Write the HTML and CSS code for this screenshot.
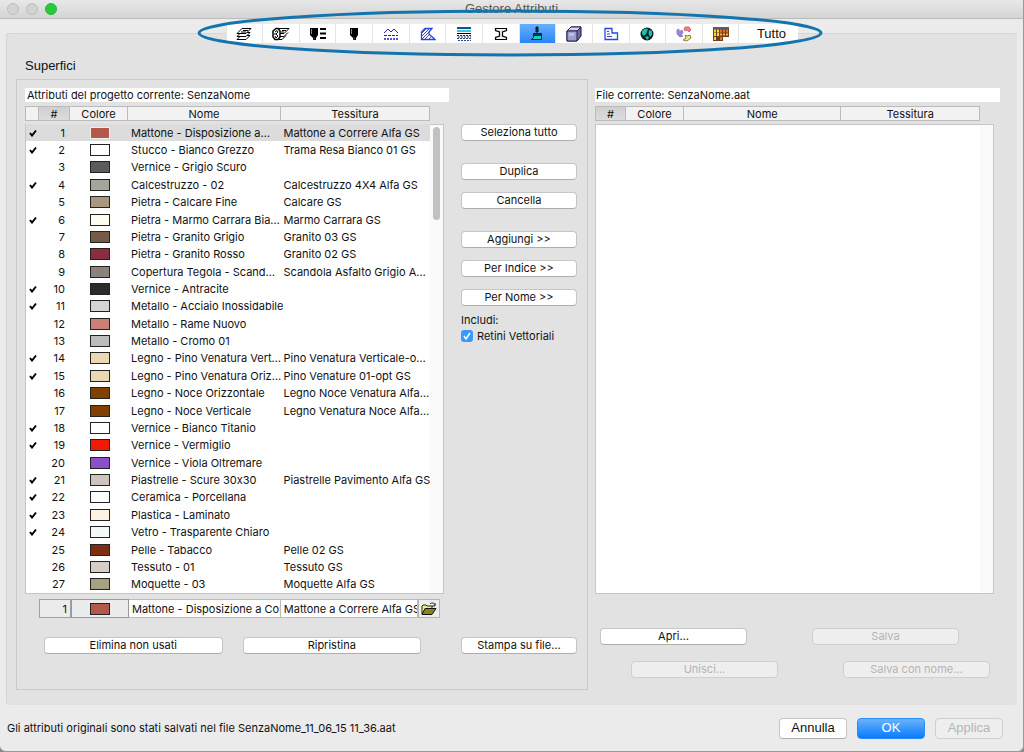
FILE: index.html
```html
<!DOCTYPE html>
<html lang="it">
<head>
<meta charset="utf-8">
<title>Gestore Attributi</title>
<link rel="stylesheet" href="styles.css">
</head>
<body>
<div class="window">
  <header class="titlebar">
    <div class="lights"><span class="light"></span><span class="light"></span><span class="light zoom"></span></div>
    <h1>Gestore Attributi</h1>
  </header>

  <div class="tabs-wrap">
    <nav class="tabs" aria-label="Attributi">
      <button type="button" aria-label="Lucidi"><svg viewBox="0 0 16 16"><g fill="#fff" stroke="#000"><path d="M1 13.500L5 9.500H14L10 13.500Z"/><path d="M1 10.500L5 6.500H14L10 10.500Z"/><path d="M1 7.500L6 2.500H15L10 7.500Z"/><path d="M7 4.500H12M5 6H10"/></g></svg></button>
      <button type="button" aria-label="Combinazioni lucidi"><svg class="wide" viewBox="0 0 18 16"><g fill="#fff" stroke="#000"><path d="M7 13.500H10L14 9.500M7 10.500H12L16 6.500M8 7.500H12L17 2.500H7L5 5M10 4.500H14M9 6H12"/><path d="M4 2.500H6L8 5V11L6 13.500H3L1 11V5Z" stroke-width="1.500"/><path d="M3 6L5 4.500L6 6L4 8L6 10L4 12L3 10M3 7V9"/></g></svg></button>
      <button type="button" aria-label="Penne e colori"><svg class="wide" viewBox="0 0 18 16"><path d="M1 2H9V9L7 12V14H4V12L1 9Z"/><path d="M4 11H6V14H4Z" fill="#11117a"/><path d="M2.500 3V8" stroke="#888"/><path d="M11 3H17M11 7.500H17M11 12H17" stroke="#000" stroke-width="2"/></svg></button>
      <button type="button" aria-label="Penne"><svg viewBox="0 0 16 16"><path d="M4 2H12V9L10 12V14H7V12L4 9Z"/><path d="M7 11H9V14H7Z" fill="#222266"/><path d="M5.500 3V8" stroke="#888"/></svg></button>
      <button type="button" aria-label="Tipi di linea"><svg viewBox="0 0 16 16"><g fill="none" stroke="#2222bb"><path d="M1 7L5 3L8 6L11 3L15 7"/><path d="M1 9.500H15" stroke-dasharray="3 1"/><path d="M1 13H15" stroke-width="1.500" stroke-dasharray="2 1"/></g></svg></button>
      <button type="button" aria-label="Retini"><svg viewBox="0 0 16 16"><path d="M1.500 6L5 2.500H12L9 6V8L15 13.500H1.500Z" fill="#fff" stroke="#2446e8" stroke-width="1.300"/><path d="M2 10L9 3M2 13L9 6M5 13L9 9M9 13L11 11M2 7L6 3" stroke="#444c98"/></svg></button>
      <button type="button" aria-label="Strutture composte"><svg viewBox="0 0 16 16"><path d="M1 1H15V3H1Z" fill="#14508c"/><path d="M1 4H15V6H1Z" fill="#39c8d8"/><path d="M1 7.500H15" stroke="#000"/><path d="M1 9.500H15M2 11H15" stroke="#222" stroke-dasharray="2 1"/><path d="M1 12.500H15M2 14.500H15" stroke="#334488" stroke-dasharray="2 1"/></svg></button>
      <button type="button" aria-label="Profili"><svg viewBox="0 0 16 16"><path d="M2.500 2.500H13.500V4.500L9.500 6V10L13.500 11.500V13.500H2.500V11.500L6.500 10V6L2.500 4.500Z" fill="#eee" stroke="#000" stroke-width="1.200"/></svg></button>
      <button type="button" class="active" aria-label="Superfici" aria-current="page"><svg viewBox="0 0 16 16"><path d="M7 1H9V6H7Z" fill="#062033" stroke="#062033"/><path d="M4.500 7.500H12.500V9H4.500Z" fill="#0c6a70" stroke="#062033"/><path d="M4.500 9.500H12.500V13.500H2.500L4.500 11.500Z" fill="#13d7c2" stroke="#06243c"/></svg></button>
      <button type="button" aria-label="Materiali da costruzione"><svg viewBox="0 0 16 16"><path d="M1 5L5 1H15V10L11 15H1Z" fill="#6a6aa8" stroke="#111133"/><path d="M1 5L5 1H15L11 5Z" fill="#d5d5f4" stroke="#222244"/><path d="M1 5H11V15H1Z" fill="#9d9dd0" stroke="#222244"/><path d="M3 7H8V10H3Z" fill="#bebee8"/></svg></button>
      <button type="button" aria-label="Zone"><svg viewBox="0 0 16 16"><path d="M2 2.500H9V7H14.500V13.500H2Z" fill="#fff" stroke="#2446f0" stroke-width="1.300"/><path d="M4 5.500H6M4 8H7M4 10.500H9" stroke="#3547a5"/></svg></button>
      <button type="button" aria-label="Città"><svg viewBox="0 0 16 16"><circle cx="8" cy="8" r="6.500" fill="#101b1b"/><path d="M3 5L6 2.500L9 3L8 6L7 8L5 10L3 8ZM10 4L13 5V9L11 11L9.500 8ZM6 11L9 10L10 12L8 14Z" fill="#0cc4b8"/></svg></button>
      <button type="button" aria-label="Marche"><svg viewBox="0 0 16 16"><path d="M9 1H13L15 4L13 6L11 4L9 5L8 3Z" fill="#ef7c83" stroke="#c6717a"/><path d="M1 4L3 3V6L6 4L7 7L5 8L7 10L4 11L1 8Z" fill="#9786d8" stroke="#9182d0"/><path d="M9 9L11 10L14 9L15 12L11 15L7 14L10 12Z" fill="#f2e47c" stroke="#8b8048"/></svg></button>
      <button type="button" aria-label="Profili operativi"><svg viewBox="0 0 16 16"><path d="M0 1H16V11H10V15H0Z" fill="#743c22"/><path d="M0 1H16V3H0Z" fill="#5f5a70"/><path d="M1 5H7M1 8.500H7M1 12.500H4" stroke="#f5dd24" stroke-width="3" stroke-dasharray="2 1"/><path d="M7 5H15M7 12.500H9" stroke="#d97525" stroke-width="3" stroke-dasharray="2 1"/><path d="M7 8.500H15" stroke="#f0b927" stroke-width="2" stroke-dasharray="2 1"/></svg></button>
      <button type="button" class="all">Tutto</button>
    </nav>
    <svg class="ellipse" viewBox="0 0 628 50" aria-hidden="true"><ellipse cx="314" cy="25" rx="311" ry="22" fill="none" stroke="#1474ad" stroke-width="3"/></svg>
  </div>

  <main class="pane">
    <h2>Superfici</h2>
    <div class="columns">
      <section class="project">
        <p class="source">Attributi del progetto corrente: SenzaNome</p>
        <div class="project-body">
          <div class="left">
            <div class="listing">
              <table class="grid">
                <thead><tr><th></th><th class="sorted">#</th><th>Colore</th><th>Nome</th><th>Tessitura</th></tr></thead>
                <tbody id="rows"></tbody>
              </table>
              <div class="scrollbar"><div class="thumb"></div></div>
            </div>
            <div class="edit">
              <input class="num" value="1" aria-label="Indice">
              <button type="button" class="color" aria-label="Colore"><span class="swatch" style="background:#b5584c"></span></button>
              <input class="text" value="Mattone - Disposizione a Correre" aria-label="Nome">
              <input class="text" value="Mattone a Correre Alfa GS" aria-label="Tessitura">
              <button type="button" class="folder" aria-label="Sfoglia"><svg viewBox="0 0 16 14"><path d="M1 12V4L2 3H5L6 4H11V6" fill="#f4ef8a" stroke="#222"/><path d="M1 12.500L4 6.500H15L11 12.500Z" fill="#85851a" stroke="#111"/><path d="M9 2C11 0 13 1 14 3M14 1V4H11" fill="none" stroke="#222"/></svg></button>
            </div>
            <div class="left-actions">
              <button type="button" class="push">Elimina non usati</button>
              <button type="button" class="push">Ripristina</button>
            </div>
          </div>
          <div class="middle">
            <button type="button" class="push">Seleziona tutto</button>
            <div class="stack">
              <button type="button" class="push">Duplica</button>
              <button type="button" class="push">Cancella</button>
            </div>
            <div class="stack">
              <button type="button" class="push">Aggiungi &gt;&gt;</button>
              <button type="button" class="push">Per Indice &gt;&gt;</button>
              <button type="button" class="push">Per Nome &gt;&gt;</button>
            </div>
            <div class="include">
              <span>Includi:</span>
              <label><input type="checkbox" checked>Retini Vettoriali</label>
            </div>
            <button type="button" class="push print">Stampa su file…</button>
          </div>
        </div>
      </section>

      <section class="file">
        <p class="source">File corrente: SenzaNome.aat</p>
        <div class="listing">
          <table class="grid">
            <thead><tr><th class="sorted">#</th><th>Colore</th><th>Nome</th><th>Tessitura</th></tr></thead>
            <tbody></tbody>
          </table>
          <div class="scrollbar"></div>
        </div>
        <div class="file-actions">
          <div><button type="button" class="push">Apri…</button><button type="button" class="push" disabled>Salva</button></div>
          <div><button type="button" class="push" disabled>Unisci…</button><button type="button" class="push" disabled>Salva con nome…</button></div>
        </div>
      </section>
    </div>
  </main>

  <footer class="footer">
    <p>Gli attributi originali sono stati salvati nel file SenzaNome_11_06_15 11_36.aat</p>
    <div class="confirm">
      <button type="button" class="push">Annulla</button>
      <button type="button" class="push primary">OK</button>
      <button type="button" class="push" disabled>Applica</button>
    </div>
  </footer>
</div>
<script src="rows.js"></script>
</body>
</html>
```
FILE: rows.js
```js
const surfaces = [
  [1, "#b5584c", "Mattone - Disposizione a…", "Mattone a Correre Alfa GS"],
  [1, "#ffffff", "Stucco - Bianco Grezzo", "Trama Resa Bianco 01 GS"],
  [0, "#5b5b5b", "Vernice - Grigio Scuro", ""],
  [1, "#a5a599", "Calcestruzzo - 02", "Calcestruzzo 4X4 Alfa GS"],
  [0, "#aa9780", "Pietra - Calcare Fine", "Calcare GS"],
  [1, "#fffdee", "Pietra - Marmo Carrara Bia…", "Marmo Carrara GS"],
  [0, "#735b45", "Pietra - Granito Grigio", "Granito 03 GS"],
  [0, "#8b2d3e", "Pietra - Granito Rosso", "Granito 02 GS"],
  [0, "#8b837b", "Copertura Tegola - Scand…", "Scandola Asfalto Grigio A…"],
  [1, "#2b2b29", "Vernice - Antracite", ""],
  [1, "#d6d4d4", "Metallo - Acciaio Inossidabile", ""],
  [0, "#c87f75", "Metallo - Rame Nuovo", ""],
  [0, "#bdbdbd", "Metallo - Cromo 01", ""],
  [1, "#ecd7b4", "Legno - Pino Venatura Vert…", "Pino Venatura Verticale-o…"],
  [1, "#ecd7b4", "Legno - Pino Venatura Oriz…", "Pino Venature 01-opt GS"],
  [0, "#804000", "Legno - Noce Orizzontale", "Legno Noce Venatura Alfa…"],
  [0, "#804000", "Legno - Noce Verticale", "Legno Venatura Noce Alfa…"],
  [1, "#ffffff", "Vernice - Bianco Titanio", ""],
  [1, "#f41806", "Vernice - Vermiglio", ""],
  [0, "#8a4fc9", "Vernice - Viola Oltremare", ""],
  [1, "#cdc5bc", "Piastrelle - Scure 30x30", "Piastrelle Pavimento Alfa GS"],
  [1, "#fcffff", "Ceramica - Porcellana", ""],
  [1, "#fdf3e2", "Plastica - Laminato", ""],
  [1, "#f3f8f8", "Vetro - Trasparente Chiaro", ""],
  [0, "#802c12", "Pelle - Tabacco", "Pelle 02 GS"],
  [0, "#d8cdc5", "Tessuto - 01", "Tessuto GS"],
  [0, "#a5a182", "Moquette - 03", "Moquette Alfa GS"]
];
const check = '<svg class="check" viewBox="0 0 8 8"><path d="M1 4L3 6.500L7 1.500" fill="none" stroke="#000" stroke-width="2"/></svg>';
document.getElementById("rows").innerHTML = surfaces.map(([used, color, name, texture], i) =>
  `<tr${i ? "" : ' class="selected"'}><td>${used ? check : ""}</td><td class="index">${i + 1}</td><td class="paint"><span class="swatch" style="background:${color}"></span></td><td>${name}</td><td>${texture}</td></tr>`
).join("");
```
FILE: styles.css
```css
* { box-sizing: border-box; }
body { margin: 0; background: #8a8a8a; font: 11px/14px Inter, "Liberation Sans", Arial, sans-serif; font-variant-ligatures: no-contextual; color: #111; }
h1, h2, p { margin: 0; font-weight: normal; }
button, input { font: inherit; color: inherit; margin: 0; }

.window { display: flex; flex-direction: column; min-height: 100vh; background: #ebebeb; border: solid #999; border-width: 0 1px 1px 0; border-radius: 0 0 6px 6px; overflow: hidden; }

.titlebar h1, .pane h2, .tabs .all, .confirm .push { font-family: "Liberation Sans", Arial, sans-serif; font-size: 13px; }

.titlebar { display: grid; grid-template-columns: 1fr auto 1fr; height: 19px; background: linear-gradient(#e8e8e8, #d4d4d4); border-bottom: 1px solid #bcbcbc; }
.titlebar h1 { line-height: 18px; color: #555; }
.lights { display: flex; gap: 7px; padding: 3px 7px; }
.light { width: 12px; height: 12px; border-radius: 50%; background: #d3d3d3; border: 1px solid #bdbdbd; }
.light.zoom { background: #27c93f; border-color: #22b838; }

.tabs-wrap { position: relative; z-index: 1; display: flex; justify-content: center; padding-top: 5px; margin-bottom: -10px; }
.tabs { display: flex; width: 572px; height: 19px; background: #fff; }
.tabs button { flex: 1; display: flex; align-items: center; justify-content: center; padding: 0; border: 0; border-left: 1px solid #e4e4e4; background: #fff; }
.tabs svg { width: 16px; height: 16px; }
.tabs svg.wide { width: 18px; }
.tabs .active { background: linear-gradient(#69b0fb, #2a85f8); }
.tabs .all { flex: 0 0 59px; padding-left: 6px; }
.ellipse { position: absolute; left: 50%; top: -11px; width: 628px; height: 50px; margin-left: -316px; pointer-events: none; }

.pane { flex: 1; display: flex; flex-direction: column; margin: 0 6px; padding: 24px 0 15px 9px; background: #e2e2e2; border: solid #d6d6d6; border-width: 1px 0 0 1px; border-radius: 3px; }
.pane h2 { padding-left: 9px; line-height: 16px; margin-bottom: 5px; }
.columns { flex: 1; display: grid; grid-template-columns: minmax(0, 572fr) minmax(0, 405fr); gap: 7px; padding-right: 17px; }
.source { background: #fff; height: 14px; padding-left: 2px; margin-bottom: 4px; }

.project { display: flex; flex-direction: column; border: 1px solid #cacaca; padding: 8px 10px 35px 8px; }
.project .source { width: 424px; }
.project-body { flex: 1; display: flex; gap: 17px; }
.left { flex: 1; min-width: 0; display: flex; flex-direction: column; }

.listing { flex: 1; display: flex; }
.grid { flex: 1; display: flex; flex-direction: column; gap: 3px; min-width: 0; }
.grid tr { display: grid; grid-template-columns: 14px 31px 58px minmax(0, 153fr) minmax(0, 149fr); }
.file .grid tr { grid-template-columns: 31px 58px 158fr 139fr; }
.grid th { height: 15px; padding: 0; font-weight: normal; line-height: 14px; text-align: center; background: #f2f2f2; border: solid #bbb; border-width: 1px 1px 1px 0; }
.grid th:first-child { border-left-width: 1px; }
.grid th.sorted { background: linear-gradient(#cfcfcf, #dcdcdc); }
.grid tbody { flex: 1; display: grid; grid-auto-rows: 1fr; background: #fff; border: solid #c6c6c6; border-width: 0 0 1px 1px; }
.file .grid tbody { border-top-width: 1px; }
.grid tbody tr { align-items: center; min-height: 17px; }
.grid td { padding: 0 0 0 2px; white-space: nowrap; line-height: 16px; }
.grid td.index { padding-right: 6px; text-align: right; }
.grid td.paint { display: flex; justify-content: center; padding: 0; }
.grid td:first-child { padding-left: 3px; display: flex; }
.selected { background: #dcdcdc; }
.check { width: 8px; height: 8px; }
.swatch { display: block; width: 20px; height: 12px; border: 1px solid #222; }
.selected .swatch { border-color: #eee; }
.scrollbar { width: 14px; margin-top: 18px; padding: 2px 3px; background: #fafafa; border: solid #c6c6c6; border-width: 1px 1px 1px 0; }
.thumb { height: 20%; border-radius: 4px; background: #c1c1c1; }

.edit { display: flex; margin: 5px 4px 0 14px; height: 19px; }
.edit .num { width: 32px; padding: 0 3px; text-align: right; background: #ebebeb; border: 1px solid #a0a0a0; }
.edit .color { width: 58px; display: flex; align-items: center; justify-content: center; padding: 0; background: #ececec; border: 1px solid #999; }
.edit .text { min-width: 0; flex: 152; padding: 0 0 0 3px; background: #fff; border: solid #bbb; border-width: 1px 1px 1px 0; }
.edit .text + .text { flex: 137; }
.folder { width: 22px; padding: 1px 2px; background: #eee; border: 1px solid #b5b5b5; }
.folder svg { display: block; width: 16px; height: 14px; }

.push { height: 17px; padding: 0 4px; line-height: 15px; background: #fff; border: 1px solid #c6c6c6; border-bottom-color: #aeaeae; border-radius: 4px; }
.push:disabled { color: #b5b5b5; background: #eee; border-color: #cfcfcf; }
.left-actions { display: grid; grid-template-columns: 1fr 1fr; gap: 20px; margin: 19px 23px 0 19px; }

.middle { flex: 0 0 116px; display: flex; flex-direction: column; gap: 22px; padding-top: 18px; }
.stack { display: flex; flex-direction: column; gap: 12px; }
.include { display: flex; flex-direction: column; gap: 2px; margin-top: -15px; }
.include label { display: flex; align-items: center; gap: 4px; }
.include input { appearance: none; width: 12px; height: 12px; border-radius: 3px; background: #3b99fc url("data:image/svg+xml,%3Csvg xmlns='http://www.w3.org/2000/svg' viewBox='0 0 12 12'%3E%3Cpath d='M3 6L5 9L9 3' fill='none' stroke='white' stroke-width='1.500'/%3E%3C/svg%3E"); }
.middle .print { margin-top: auto; }

.file { display: flex; flex-direction: column; padding-top: 9px; }
.file .source { padding-left: 1px; }
.file .listing { padding-right: 6px; }
.file-actions { display: grid; gap: 16px; padding: 34px 10px 12px 5px; }
.file-actions div { display: flex; justify-content: space-between; padding-right: 31px; }
.file-actions div + div { padding: 0 0 0 31px; }
.file-actions .push { width: 147px; }

.footer { display: flex; align-items: center; justify-content: space-between; height: 46px; padding: 0 20px 0 7px; }
.confirm { display: flex; gap: 10px; }
.confirm .push { width: 68px; height: 21px; line-height: 18px; }
.confirm .primary { color: #fff; background: linear-gradient(#6bb3fa, #087bff); border-color: #2a8cf5; }
```
